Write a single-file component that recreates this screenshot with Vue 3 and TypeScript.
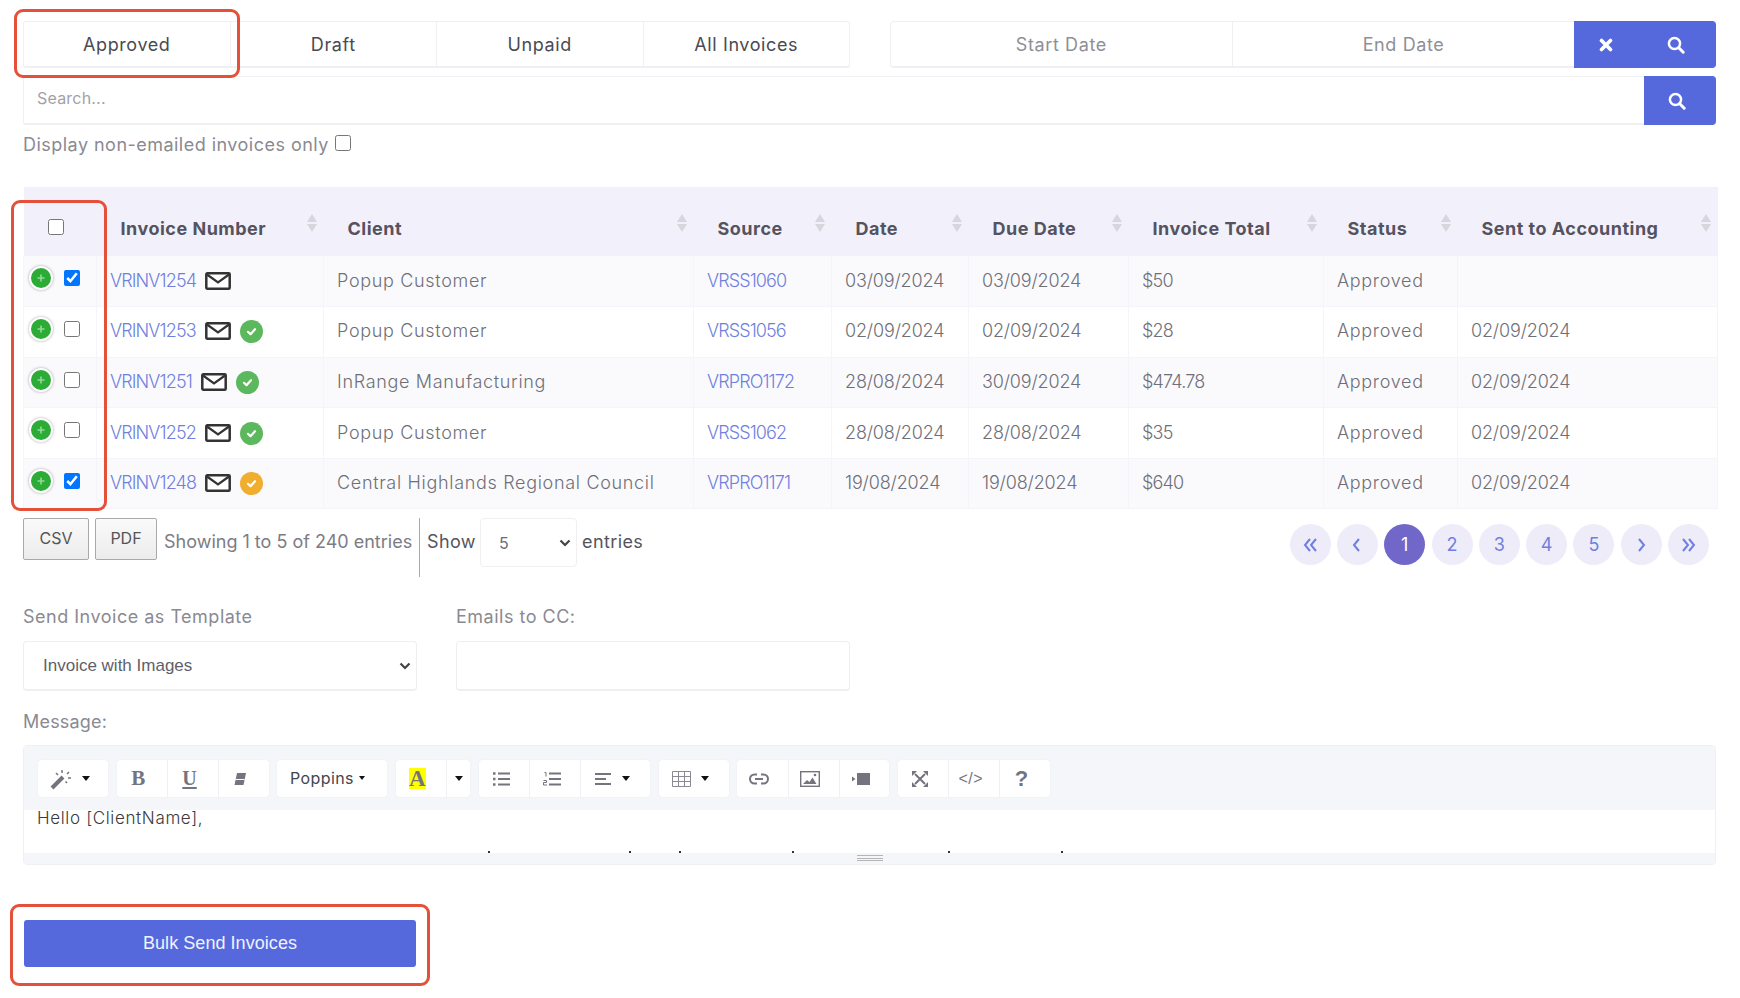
<script setup lang="ts">
interface Row {
  num: string
  client: string
  source: string
  date: string
  due: string
  total: string
  sent: string
  checked: boolean
  mark: '' | 'green' | 'orange'
}
const tabs = ['Approved', 'Draft', 'Unpaid', 'All Invoices']
const columns = ['Invoice Number', 'Client', 'Source', 'Date', 'Due Date', 'Invoice Total', 'Status', 'Sent to Accounting']
const rows: Row[] = [
  { num: 'VRINV1254', client: 'Popup Customer', source: 'VRSS1060', date: '03/09/2024', due: '03/09/2024', total: '$50', sent: '', checked: true, mark: '' },
  { num: 'VRINV1253', client: 'Popup Customer', source: 'VRSS1056', date: '02/09/2024', due: '02/09/2024', total: '$28', sent: '02/09/2024', checked: false, mark: 'green' },
  { num: 'VRINV1251', client: 'InRange Manufacturing', source: 'VRPRO1172', date: '28/08/2024', due: '30/09/2024', total: '$474.78', sent: '02/09/2024', checked: false, mark: 'green' },
  { num: 'VRINV1252', client: 'Popup Customer', source: 'VRSS1062', date: '28/08/2024', due: '28/08/2024', total: '$35', sent: '02/09/2024', checked: false, mark: 'green' },
  { num: 'VRINV1248', client: 'Central Highlands Regional Council', source: 'VRPRO1171', date: '19/08/2024', due: '19/08/2024', total: '$640', sent: '02/09/2024', checked: true, mark: 'orange' },
]
const pages = [
  { label: '«', d: 'M8 2L3 8l5 6M14 2L9 8l5 6' },
  { label: '‹', d: 'M10 2L5 8l5 6' },
  { label: '1', d: '' },
  { label: '2', d: '' },
  { label: '3', d: '' },
  { label: '4', d: '' },
  { label: '5', d: '' },
  { label: '›', d: 'M6 2l5 6-5 6' },
  { label: '»', d: 'M2 2l5 6-5 6M8 2l5 6-5 6' },
]
const dots = [464, 605, 655, 768, 924, 1037]
</script>

<template>
  <div class="page">
    <div class="top">
      <div class="tabs">
        <div v-for="t in tabs" :key="t" class="tab">{{ t }}</div>
      </div>
      <div class="dates">
        <div class="date">Start Date</div>
        <div class="date">End Date</div>
        <div class="date-btns">
          <svg width="14" height="14" viewBox="0 0 14 14"><path d="M2.500 2.500l9 9M11.500 2.500l-9 9" stroke="#fff" stroke-width="3.600" stroke-linecap="round" /></svg>
          <svg width="18" height="18" viewBox="0 0 18 18"><circle cx="7.500" cy="7.500" r="5.600" fill="none" stroke="#fff" stroke-width="2.500" /><path d="M11.800 11.800l4.400 4.400" stroke="#fff" stroke-width="3" stroke-linecap="round" /></svg>
        </div>
      </div>
    </div>

    <div class="search">
      <div class="search-text">Search...</div>
      <div class="search-btn">
        <svg width="18" height="18" viewBox="0 0 18 18"><circle cx="7.500" cy="7.500" r="5.600" fill="none" stroke="#fff" stroke-width="2.500" /><path d="M11.800 11.800l4.400 4.400" stroke="#fff" stroke-width="3" stroke-linecap="round" /></svg>
      </div>
    </div>

    <label class="only">Display non-emailed invoices only<input type="checkbox" class="check" /></label>

    <table class="grid">
      <colgroup>
        <col style="width: 73px" /><col style="width: 227px" /><col style="width: 370px" /><col style="width: 138px" />
        <col style="width: 137px" /><col style="width: 160px" /><col style="width: 195px" /><col style="width: 134px" /><col />
      </colgroup>
      <thead>
        <tr>
          <th class="sel-head"><input type="checkbox" class="check" /></th>
          <th v-for="c in columns" :key="c">
            <div class="th-in">
              <span>{{ c }}</span>
              <span class="sort"><i class="up"></i><i class="down"></i></span>
            </div>
          </th>
        </tr>
      </thead>
      <tbody>
        <tr v-for="r in rows" :key="r.num">
          <td class="sel">
            <div class="sel-in">
              <span class="plus">
                <svg width="12" height="12" viewBox="0 0 12 12"><path d="M6 2.500v7M2.500 6h7" stroke="#8fdc95" stroke-width="1.600" /></svg>
              </span>
              <input type="checkbox" class="check" :checked="r.checked" />
            </div>
          </td>
          <td>
            <div class="num">
              <a class="link">{{ r.num }}</a>
              <svg class="mail" width="26" height="18" viewBox="0 0 26 18">
                <rect x="1.300" y="1.300" width="23.400" height="15.400" rx="1" fill="#fff" stroke="#333" stroke-width="2.500" />
                <path d="M2 2.500l11 8 11-8" fill="none" stroke="#333" stroke-width="2.200" />
              </svg>
              <span v-if="r.mark" class="mark" :class="r.mark">
                <svg width="13" height="13" viewBox="0 0 13 13"><path d="M3 6.800l2.500 2.400L10 4.200" fill="none" stroke="#fff" stroke-width="2.200" stroke-linecap="round" stroke-linejoin="round" /></svg>
              </span>
            </div>
          </td>
          <td class="wide">{{ r.client }}</td>
          <td><a class="link">{{ r.source }}</a></td>
          <td class="tight">{{ r.date }}</td>
          <td class="tight">{{ r.due }}</td>
          <td class="money">{{ r.total }}</td>
          <td class="wide">Approved</td>
          <td class="tight">{{ r.sent }}</td>
        </tr>
      </tbody>
    </table>

    <div class="foot">
      <div class="foot-left">
        <button class="exp csv">CSV</button>
        <button class="exp pdf">PDF</button>
        <span class="showing">Showing 1 to 5 of 240 entries</span>
        <span class="sep"></span>
        <span class="show">Show</span>
        <select class="len"><option>5</option></select>
        <span class="show">entries</span>
      </div>
      <div class="pager">
        <span v-for="p in pages" :key="p.label" class="pg" :class="{ on: p.label === '1' }">
          <svg v-if="p.d" width="16" height="16" viewBox="0 0 16 16"><path :d="p.d" fill="none" stroke="#6f7fe0" stroke-width="2" /></svg>
          <template v-else>{{ p.label }}</template>
        </span>
      </div>
    </div>

    <div class="form">
      <div class="field">
        <div class="lab">Send Invoice as Template</div>
        <select class="tpl"><option>Invoice with Images</option></select>
      </div>
      <div class="field">
        <div class="lab">Emails to CC:</div>
        <div class="cc"></div>
      </div>
    </div>

    <div class="lab msg">Message:</div>
    <div class="editor">
      <div class="bar">
        <div class="grp">
          <div class="b w70 magic">
            <svg width="24" height="22" viewBox="0 0 24 22"><path d="M2 20L13 9" stroke="#74747f" stroke-width="4" /><path d="M12 2v3M19 4l-2 2M21 10h-3M17 15l-1.500-1.500M6 5l2 2" stroke="#74747f" stroke-width="1.500" /></svg>
            <i class="caret"></i>
          </div>
        </div>
        <div class="grp">
          <div class="b serif">B</div>
          <div class="b serif under">U</div>
          <div class="b">
            <svg width="16" height="16" viewBox="0 0 16 16"><path d="M5 2h9l-2.500 12H2.500z" fill="#74747f" /><path d="M3.500 8.500h9" stroke="#fff" stroke-width="1" /></svg>
          </div>
        </div>
        <div class="grp">
          <div class="b font">Poppins<i class="caret small"></i></div>
        </div>
        <div class="grp">
          <div class="b"><span class="hl">A</span></div>
          <div class="b w24"><i class="caret"></i></div>
        </div>
        <div class="grp">
          <div class="b">
            <svg width="18" height="16" viewBox="0 0 18 16"><path d="M6 2.500h12M6 8h12M6 13.500h12" stroke="#74747f" stroke-width="2" /><path d="M1 2.500h2.500M1 8h2.500M1 13.500h2.500" stroke="#74747f" stroke-width="2.400" /></svg>
          </div>
          <div class="b">
            <svg width="18" height="16" viewBox="0 0 18 16"><path d="M6 2.500h12M6 8h12M6 13.500h12" stroke="#74747f" stroke-width="2" /><path d="M1.500 1.500h1.500v4M.5 9.500h3v2h-3v2.500h3.500" fill="none" stroke="#74747f" stroke-width="1" /></svg>
          </div>
          <div class="b w70">
            <svg width="17" height="14" viewBox="0 0 17 14"><path d="M0 2h16M0 7h11M0 12h16" stroke="#74747f" stroke-width="2" /></svg>
            <i class="caret"></i>
          </div>
        </div>
        <div class="grp">
          <div class="b w70">
            <svg width="19" height="16" viewBox="0 0 19 16"><path d="M.5.500h18v15H.5zM.5 5.500h18M.5 10.500h18M6.500.500v15M12.500.500v15" fill="none" stroke="#8a8a94" stroke-width="1" /></svg>
            <i class="caret"></i>
          </div>
        </div>
        <div class="grp">
          <div class="b">
            <svg width="20" height="12" viewBox="0 0 20 12"><path d="M8 1.500H5.500a4.500 4.500 0 0 0 0 9H8M12 1.500h2.500a4.500 4.500 0 0 1 0 9H12M6 6h8" fill="none" stroke="#74747f" stroke-width="2" /></svg>
          </div>
          <div class="b">
            <svg width="20" height="16" viewBox="0 0 20 16"><rect x=".7" y=".7" width="18.600" height="14.600" fill="none" stroke="#74747f" stroke-width="1.400" /><path d="M3 13l4-4 2.500 2 3-4.500 4 6.500z" fill="#74747f" /><circle cx="15" cy="4" r="1.300" fill="#74747f" /></svg>
          </div>
          <div class="b">
            <svg width="18" height="12" viewBox="0 0 18 12"><rect x="5" y="0" width="13" height="12" fill="#74747f" /><path d="M0 3.500l3.500 2.500L0 8.500z" fill="#74747f" /></svg>
          </div>
        </div>
        <div class="grp">
          <div class="b">
            <svg width="16" height="16" viewBox="0 0 16 16"><path d="M3 3l10 10M13 3L3 13" stroke="#74747f" stroke-width="2" /><path d="M0 0h5L0 5zM16 0h-5l5 5zM0 16h5l-5-5zM16 16h-5l5-5z" fill="#74747f" /></svg>
          </div>
          <div class="b code">&lt;/&gt;</div>
          <div class="b help">?</div>
        </div>
      </div>
      <div class="body">
        <div class="hello">Hello [ClientName],</div>
        <i v-for="d in dots" :key="d" class="dot" :style="{ left: d + 'px' }"></i>
      </div>
      <div class="status"><span class="grip"></span></div>
    </div>

    <button class="bulk">Bulk Send Invoices</button>

    <div class="ring ring-tab"></div>
    <div class="ring ring-sel"></div>
    <div class="ring ring-bulk"></div>
  </div>
</template>

<style>
html, body { margin: 0; background: #fff; }
</style>

<style scoped>
.page {
  position: relative;
  box-sizing: border-box;
  width: 1740px;
  height: 998px;
  padding: 21px 0 0 23px;
  font-family: Inter, "Noto Sans", sans-serif;
  font-size: 18px;
  color: #7c7c84;
  overflow: hidden;
}
.top { display: flex; gap: 40px; width: 1693px; }
.tabs { display: flex; width: 827px; height: 47px; box-sizing: border-box; border: 1px solid #f0f0f4; border-bottom-width: 2px; border-radius: 3px; }
.tab { flex: 1; display: flex; align-items: center; justify-content: center; color: #4a4a52; border-left: 1px solid #f0f0f4; letter-spacing: 0.6px; }
.tab:first-child { border-left: 0; }
.dates { display: flex; width: 826px; height: 47px; box-sizing: border-box; border: 1px solid #f0f0f4; border-bottom-width: 2px; border-radius: 4px; }
.date { width: 341.7px; flex: none; display: flex; align-items: center; justify-content: center; color: #8f8f96; border-right: 1px solid #f0f0f4; box-sizing: border-box; letter-spacing: 0.6px; }
.date:nth-child(2) { border-right: 0; }
.date-btns { flex: 1; margin: -1px -1px -2px 0; background: #5569dd; border-radius: 0 4px 4px 0; display: flex; align-items: center; justify-content: space-between; padding: 0 31px 0 25px; }
.search { display: flex; width: 1693px; height: 49px; margin-top: 8px; box-sizing: border-box; border: 1px solid #f0f0f4; border-bottom-width: 2px; border-radius: 3px; }
.search-text { flex: 1; padding: 0 0 4px 13px; display: flex; align-items: center; font-size: 16px; color: #a2a2aa; letter-spacing: 0.2px; }
.search-btn { width: 72px; margin: -1px -1px -2px 0; padding-right: 7px; box-sizing: border-box; background: #5569dd; border-radius: 0 4px 4px 0; display: flex; align-items: center; justify-content: center; }
.only { display: flex; align-items: center; gap: 6px; height: 24px; margin-top: 7px; color: #8a8a92; letter-spacing: 0.47px; }
.only .check { margin-top: -3px; }
.check { width: 16px; height: 16px; margin: 0; accent-color: #0075ff; flex: none; }

.grid { border-collapse: collapse; table-layout: fixed; width: 1695px; margin-top: 31px; }
.grid th { height: 69px; padding: 11px 7px 0 24px; background: #f2f1fb; box-sizing: border-box; text-align: left; color: #55535f; font-weight: 700; font-size: 18px; vertical-align: middle; letter-spacing: 0.5px; }
.grid th.sel-head { padding: 14px 0 0 24px; }
.th-in { display: flex; justify-content: space-between; align-items: flex-start; height: 32px; line-height: 36px; white-space: nowrap; }
.sort { width: 10px; display: flex; flex-direction: column; gap: 2px; margin-top: 3px; flex: none; }
.sort i { display: block; width: 0; height: 0; border-left: 5px solid transparent; border-right: 5px solid transparent; }
.sort .up { border-bottom: 8px solid #d6d6dc; }
.sort .down { border-top: 8px solid #d6d6dc; }
.grid td { height: 50.6px; padding: 0 0 2px 13px; box-sizing: border-box; border: 1px solid #f4f4f9; border-top: 0; white-space: nowrap; font-weight: 300; color: #6f6f78; }
.grid tbody tr:nth-child(odd) td { background: #fafafd; }
.grid td.sel { padding: 0 0 2px 5px; }
.wide { letter-spacing: 0.68px; }
.tight { letter-spacing: -0.15px; }
.money { letter-spacing: -0.8px; }
.sel-in { display: flex; align-items: center; gap: 11px; margin-top: -3.500px; }
.plus { width: 20px; height: 20px; border-radius: 50%; background: #2cab37; border: 2px solid #fff; box-shadow: 0 0 3px rgba(0, 0, 0, 0.35); display: flex; align-items: center; justify-content: center; }
.num { display: flex; align-items: center; margin-left: 0; }
.link { color: #6f7fe0; letter-spacing: -0.9px; }
.mail { margin-left: 9px; margin-top: 1px; }
.mark { width: 23px; height: 23px; border-radius: 50%; margin-left: 9px; margin-top: 2px; display: flex; align-items: center; justify-content: center; }
.mark.green { background: #5cb85c; }
.mark.orange { background: #f0ad2e; }

.foot { display: flex; justify-content: space-between; width: 1686px; margin-top: 9px; height: 59px; }
.foot-left { display: flex; align-items: flex-start; }
.exp { height: 42px; box-sizing: border-box; border: 1px solid #a9a9a9; border-radius: 2px; background: linear-gradient(#fafafa, #ececec); color: #555; font-family: Inter, sans-serif; font-size: 16px; padding: 0 0 2px; }
.csv { width: 66px; }
.pdf { width: 62px; margin-left: 6px; }
.showing { margin-left: 7px; line-height: 48px; width: 255px; color: #7c7c84; white-space: nowrap; }
.sep { width: 1px; height: 59px; background: #a9a9ad; }
.show { line-height: 48px; color: #55555c; margin-left: 7px; letter-spacing: 0.4px; }
.len {
  appearance: none;
  width: 97px; height: 49px; margin-left: 4px; padding-left: 18px; box-sizing: border-box;
  border: 1px solid #f0f0f4; border-radius: 4px; color: #6d6d75; font-family: Inter, sans-serif; font-size: 16px;
  background: #fff url("data:image/svg+xml,%3Csvg xmlns='http://www.w3.org/2000/svg' width='12' height='8'%3E%3Cpath d='M1.500 1.500L6 6l4.500-4.500' fill='none' stroke='%23444' stroke-width='2.200'/%3E%3C/svg%3E") no-repeat right 5px center;
}
.show:last-child { margin-left: 5px; }
.pager { display: flex; gap: 6.300px; margin-top: 6px; }
.pg { width: 41px; height: 41px; border-radius: 50%; background: #eeecf8; color: #6f7fe0; display: flex; align-items: center; justify-content: center; font-size: 18px; }
.pg.on { background: #7167c9; color: #fff; }

.form { display: flex; gap: 39.500px; margin-top: 28px; }
.field { width: 393.500px; }
.lab { line-height: 24px; color: #8a8a92; letter-spacing: 0.5px; }
.tpl {
  appearance: none;
  display: block; width: 100%; height: 50px; margin-top: 12px; padding-left: 19px; box-sizing: border-box;
  border: 1px solid #eeeef3; border-bottom-width: 2px; border-radius: 4px; color: #5f5f68; font-family: "Liberation Sans", sans-serif; font-size: 17px;
  background: #fff url("data:image/svg+xml,%3Csvg xmlns='http://www.w3.org/2000/svg' width='12' height='8'%3E%3Cpath d='M1.500 1.500L6 6l4.500-4.500' fill='none' stroke='%23444' stroke-width='2.200'/%3E%3C/svg%3E") no-repeat right 5px center;
}
.cc { height: 50px; margin-top: 12px; box-sizing: border-box; border: 1px solid #eeeef3; border-bottom-width: 2px; border-radius: 4px; }
.msg { margin-top: 19px; letter-spacing: 0.2px; }
.editor { width: 1693px; height: 120px; margin-top: 11px; box-sizing: border-box; border: 1px solid #f0f0f4; border-radius: 4px; display: flex; flex-direction: column; overflow: hidden; }
.bar { height: 64px; flex: none; background: #f5f6f9; display: flex; gap: 8.500px; padding: 14px 0 0 14px; box-sizing: border-box; }
.grp { display: flex; height: 37px; background: #fff; border-radius: 3px; box-shadow: 0 0 1px rgba(0, 0, 0, 0.12); }
.b { width: 50.700px; display: flex; align-items: center; justify-content: center; border-left: 1px solid #f0f0f4; box-sizing: border-box; gap: 10px; color: #74747f; padding-right: 7px; }
.b:first-child { border-left: 0; }
.w70 { width: 70px; }
.magic { gap: 8px; }
.w24 { width: 24px; padding-right: 0; }
.caret { display: block; width: 0; height: 0; border-left: 4px solid transparent; border-right: 4px solid transparent; border-top: 5px solid #111; }
.caret.small { margin-left: 5px; border-left-width: 3.500px; border-right-width: 3.500px; border-top-width: 4px; }
.serif { font-family: "Liberation Serif", serif; font-weight: 700; font-size: 21px; }
.under { text-decoration: underline; text-underline-offset: 2px; font-size: 20px; }
.font { width: 110px; color: #45454d; font-size: 16px; gap: 0; justify-content: flex-start; padding: 0 0 2px 13px; letter-spacing: 0.4px; }
.hl { background: #ff0; font-family: "Liberation Serif", serif; font-weight: 700; font-size: 23px; line-height: 21px; width: 17px; text-align: center; color: #74747f; }
.code { font-family: "Liberation Sans", sans-serif; font-size: 16px; letter-spacing: 0.5px; }
.help { font-family: "Liberation Sans", sans-serif; font-weight: 700; font-size: 22px; }
.body { position: relative; height: 43px; flex: none; padding: 0 0 0 13px; }
.hello { color: #3a3a40; font-size: 17px; line-height: 22px; margin-top: -3px; letter-spacing: 0.65px; font-weight: 300; }
.dot { position: absolute; bottom: 0; width: 2px; height: 2px; background: #333; }
.status { flex: 1; background: #f5f6f9; position: relative; }
.grip { position: absolute; left: 833px; top: 2px; width: 26px; height: 6px; border-top: 1px solid #b5b5b5; border-bottom: 1px solid #b5b5b5; box-sizing: border-box; background: linear-gradient(#b5b5b5, #b5b5b5) center / 100% 1px no-repeat; }
.bulk { display: block; width: 392px; height: 47px; margin: 55px 0 0 1px; border: 0; border-radius: 3px; background: #5569dd; color: #f0f2ff; font-family: "Liberation Sans", sans-serif; font-size: 18px; letter-spacing: 0.05px; padding: 0; }

.ring { position: absolute; box-sizing: border-box; border: 3px solid #e5503a; border-radius: 9px; pointer-events: none; }
.ring-tab { left: 14px; top: 9px; width: 226px; height: 69px; }
.ring-sel { left: 10.500px; top: 200px; width: 96px; height: 311px; }
.ring-bulk { left: 10px; top: 904px; width: 420px; height: 82px; }
</style>
